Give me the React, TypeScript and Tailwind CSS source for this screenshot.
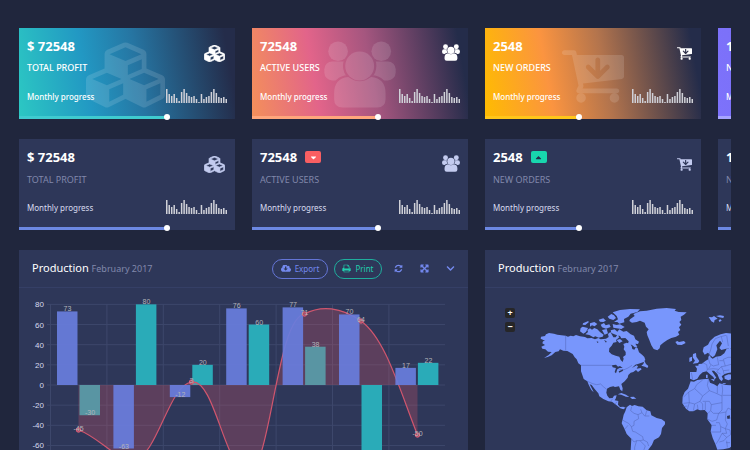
import React, { useId } from "react";
import { FaCaretDown, FaCaretUp, FaChevronDown } from "react-icons/fa";

type IconProps = { className?: string };

function CubesIcon({ className }: IconProps) {
  return (
    <svg viewBox="0 0 2176 1792" className={className} fill="currentColor" aria-hidden="true">
      <path d="M640 1632l384-192v-314l-384 164v342zM576 1178l404-173-404-173-404 173zM1664 1632l384-192v-314l-384 164v342zM1600 1178l404-173-404-173-404 173zM1152 893l384-165v-266l-384 164v267zM1088 512l441-189-441-189-441 189zM2176 1024v416q0 36-19 67t-52 47l-448 224q-25 14-57 14t-57-14l-448-224q-4-2-7-4-2 2-7 4l-448 224q-25 14-57 14t-57-14l-448-224q-33-16-52-47t-19-67v-416q0-38 21.5-70t56.5-48l434-186v-400q0-38 21.5-70t56.5-48l448-192q23-10 50-10t50 10l448 192q35 16 56.5 48t21.5 70v400l434 186q36 16 57 48t21 70z" fillRule="evenodd" />
    </svg>
  );
}

function UsersIcon({ className }: IconProps) {
  const id = useId();
  return (
    <svg viewBox="250 62 220 204" className={className} fill="currentColor" aria-hidden="true">
      <mask id={id} maskUnits="userSpaceOnUse" x="250" y="62" width="220" height="204">
        <rect x="250" y="62" width="220" height="204" fill="white" />
        <circle cx="359" cy="138" r="51" fill="black" />
        <rect x="274" y="166" width="171" height="110" rx="48" fill="black" />
      </mask>
      <g mask={`url(#${id})`}>
        <rect x="251" y="124" width="90" height="58" rx="24" />
        <rect x="378" y="124" width="91" height="58" rx="24" />
      </g>
      <circle cx="293" cy="93" r="30" />
      <circle cx="425" cy="93" r="30" />
      <circle cx="359" cy="138" r="44" />
      <path d="M324 172Q359 198 394 172Q438 176 438 222V240Q438 265 412 265H307Q281 265 281 240V222Q281 176 324 172Z" />
    </svg>
  );
}

function CartIcon({ className }: IconProps) {
  return (
    <svg viewBox="0 256 1664 1408" className={className} fill="currentColor" aria-hidden="true">
      <path fillRule="evenodd" d="M1280 704q0-26-19-45t-45-19q-26 0-45 19l-147 146v-293q0-26-19-45t-45-19-45 19-19 45v293l-147-146q-19-19-45-19t-45 19-19 45 19 45l256 256q19 19 45 19t45-19l256-256q19-19 19-45zM640 1536q0 52-38 90t-90 38-90-38-38-90 38-90 90-38 90 38 38 90zm896 0q0 52-38 90t-90 38-90-38-38-90 38-90 90-38 90 38 38 90zM1664 448v512q0 24-16.5 42.5t-40.5 21.5l-1044 122q13 60 13 70 0 16-24 64h920q26 0 45 19t19 45-19 45-45 19h-1024q-26 0-45-19t-19-45q0-11 8-31.5t16-36 21.5-40 15.5-29.5l-177-823h-204q-26 0-45-19t-19-45 19-45 45-19h256q16 0 28.5 6.5t19.5 15.5 13 24.5 8 26 5.5 29.5 4.5 26h1201q26 0 45 19t19 45z" />
    </svg>
  );
}

function PrintIcon({ className }: IconProps) {
  return (
    <svg viewBox="0 0 1792 1792" className={className} fill="currentColor" aria-hidden="true">
      <path fillRule="evenodd" d="M448 1536h896v-256h-896v256zm0-640h896v-384h-160q-40 0-68-28t-28-68v-160h-640v640zm1152 64q0-26-19-45t-45-19-45 19-19 45 19 45 45 19 45-19 19-45zm128 0v416q0 13-9.500 22.500t-22.500 9.500h-224v160q0 40-28 68t-68 28h-960q-40 0-68-28t-28-68v-160h-224q-13 0-22.500-9.500t-9.500-22.500v-416q0-79 56.500-135.500t135.500-56.500h64v-544q0-40 28-68t68-28h672q40 0 88 20t76 48l152 152q28 28 48 76t20 88v256h64q79 0 135.500 56.500t56.500 135.500z" />
    </svg>
  );
}

function CloudIcon({ className }: IconProps) {
  return (
    <svg viewBox="-64 256 1920 1280" className={className} fill="currentColor" aria-hidden="true">
      <path fillRule="evenodd" d="M1216 928q0-14-9-23t-23-9h-224v-352q0-13-9.500-22.500t-22.500-9.500h-192q-13 0-22.500 9.500t-9.500 22.500v352h-224q-13 0-22.500 9.500t-9.500 22.500q0 14 9 23l352 352q9 9 23 9t23-9l351-351q10-12 10-24zm640 224q0 159-112.500 271.500t-271.500 112.500h-1088q-185 0-316.500-131.500t-131.500-316.500q0-130 70-240t188-165q-2-30-2-43 0-212 150-362t362-150q156 0 285.500 87t188.500 231q71-62 166-62 106 0 181 75t75 181q0 76-41 138 130 31 213.500 135.500t83.500 238.500z" />
    </svg>
  );
}

function RefreshIcon({ className }: IconProps) {
  return (
    <svg viewBox="0 0 1792 1792" className={className} fill="currentColor" aria-hidden="true">
      <path d="M1639 1056q0 5-1 7-64 268-268 434.500t-478 166.500q-146 0-282.500-55t-243.500-157l-129 129q-19 19-45 19t-45-19-19-45v-448q0-26 19-45t45-19h448q26 0 45 19t19 45-19 45l-137 137q71 66 161 102t187 36q134 0 250-65t186-179q11-17 53-117 8-23 30-23h192q13 0 22.500 9.500t9.500 22.500zm25-800v448q0 26-19 45t-45 19h-448q-26 0-45-19t-19-45 19-45l138-138q-148-137-349-137-134 0-250 65t-186 179q-11 17-53 117-8 23-30 23h-199q-13 0-22.500-9.500t-9.500-22.500v-7q65-268 270-434.500t480-166.500q146 0 284 55.500t245 156.500l130-129q19-19 45-19t45 19 19 45z" />
    </svg>
  );
}

function ExpandIcon({ className }: IconProps) {
  return (
    <svg viewBox="0 0 1792 1792" className={className} fill="currentColor" stroke="currentColor" strokeWidth="80" aria-hidden="true">
      <path d="M1411 541l-355 355 355 355 144-144q29-31 70-14 39 17 39 59v448q0 26-19 45t-45 19h-448q-42 0-59-40-17-39 14-69l144-144-355-355-355 355 144 144q31 30 14 69-17 40-59 40h-448q-26 0-45-19t-19-45v-448q0-42 40-59 39-17 69 14l144 144 355-355-355-355-144 144q-19 19-45 19-12 0-24-5-40-17-40-59v-448q0-26 19-45t45-19h448q42 0 59 40 17 39-14 69l-144 144 355 355 355-355-144-144q-31-30-14-69 17-40 59-40h448q26 0 45 19t19 45v448q0 42-39 59-13 5-25 5-26 0-45-19z" />
    </svg>
  );
}

const sparkValues = [14, 9, 7, 9, 5, 2, 11, 14, 10, 7, 6, 7, 4, 1, 9, 4, 6, 7, 11, 14, 10, 6, 5, 6, 4];

function Sparkline() {
  return (
    <svg viewBox="0 0 61 14" className="h-[14px] w-[61px] fill-[#d0d1d8]" aria-hidden="true">
      {sparkValues.map((v, i) => (
        <rect key={i} x={i * 2.48} y={14 - v} width="1.5" height={v} />
      ))}
    </svg>
  );
}

type Stat = {
  value: string;
  title: string;
  Icon: (p: IconProps) => React.ReactElement;
  small: string;
  large: string;
  gradient: string;
  line: string;
  progress: number;
  trend?: "up" | "down";
};

const stats: Stat[] = [
  {
    value: "$ 72548",
    title: "TOTAL PROFIT",
    Icon: CubesIcon,
    small: "mt-[7px] mr-[2px] h-[17px] w-[21px] stroke-current stroke-[70]",
    large: "left-[67px] top-[14px] h-[66px] w-[79px]",
    gradient: "bg-[linear-gradient(80deg,#2cc8c3_0%,#2298c3_32%,#2675a2_55%,#242c4a_95%)]",
    line: "bg-[#3fcbcf]",
    progress: 68.5,
  },
  {
    value: "72548",
    title: "ACTIVE USERS",
    Icon: UsersIcon,
    small: "mt-[6px] h-[17px] w-[18px]",
    large: "left-[72px] top-[13px] h-[67px] w-[72px]",
    gradient: "bg-[linear-gradient(80deg,#f4905a_0%,#e2648a_30%,#a5567f_55%,#242c4a_95%)]",
    line: "bg-[#ffa67c]",
    progress: 58.5,
    trend: "down",
  },
  {
    value: "2548",
    title: "NEW ORDERS",
    Icon: CartIcon,
    small: "mt-[9px] mr-px h-[13px] w-[15px]",
    large: "left-[77px] top-[22px] h-[53px] w-[62px]",
    gradient: "bg-[linear-gradient(80deg,#ffbc00_0%,#fb9440_30%,#b3744d_55%,#242c4a_95%)]",
    line: "bg-[#ffc61a]",
    progress: 43.5,
    trend: "up",
  },
  {
    value: "1548",
    title: "NEW CLIENTS",
    Icon: UsersIcon,
    small: "mt-[6px] h-[17px] w-[18px]",
    large: "left-[72px] top-[13px] h-[67px] w-[72px]",
    gradient: "bg-[linear-gradient(80deg,#7d72fb_0%,#7a6ff5_30%,#5a54b4_55%,#242c4a_95%)]",
    line: "bg-[#a6a4ff]",
    progress: 60,
  },
];

function StatCard({ stat, vivid }: { stat: Stat; vivid: boolean }) {
  const { Icon } = stat;
  return (
    <article className={`relative flex flex-col text-white ${vivid ? stat.gradient : "bg-[#2e3759]"}`}>
      {vivid && <Icon className={`absolute text-white/13 ${stat.large}`} />}
      <div className="flex items-start justify-between px-2 pt-[10px]">
        <div>
          <div className="flex items-center gap-2">
            <p className="text-[13px] leading-4 font-bold">{stat.value}</p>
            {!vivid && stat.trend === "down" && (
              <span className="flex h-3 w-4 items-center justify-center rounded-[2px] bg-[#f95f62]">
                <FaCaretDown className="size-[9px]" />
              </span>
            )}
            {!vivid && stat.trend === "up" && (
              <span className="flex h-3 w-4 items-center justify-center rounded-[2px] bg-[#18d6ae] text-[#23304e]">
                <FaCaretUp className="size-[9px]" />
              </span>
            )}
          </div>
          <h3 className={`text-[9px] leading-3 ${vivid ? "mt-2 font-medium" : "mt-[9px] text-[#8188ab]"}`}>{stat.title}</h3>
        </div>
        <Icon className={`${stat.small} ${vivid ? "" : "text-[#c3cbef]"}`} />
      </div>
      <div className={`flex items-end justify-between px-2 ${vivid ? "mt-[15px]" : "mt-[14px]"}`}>
        <p className={`text-[8px] leading-3 ${vivid ? "font-medium" : "text-[#d7dbef]"}`}>Monthly progress</p>
        <Sparkline />
      </div>
      <div className="mt-[13px] h-[3px]">
        <div
          role="progressbar"
          aria-label={stat.title}
          aria-valuenow={stat.progress}
          className={`relative h-full ${vivid ? stat.line : "bg-[#6c88e2]"}`}
          style={{ width: `${stat.progress}%` }}
        >
          <span className="absolute -top-[2px] -right-[3px] size-[6px] rounded-full bg-white" />
        </div>
      </div>
    </article>
  );
}

function Panel({ actions, children }: { actions?: React.ReactNode; children: React.ReactNode }) {
  return (
    <section className="bg-[#2e3759]">
      <header className="flex h-[38px] items-center justify-between border-b border-[#353f66] px-[13px]">
        <h2 className="text-[11px] leading-4 text-white">
          Production <small className="text-[9px] text-[#8188ab]">February 2017</small>
        </h2>
        {actions}
      </header>
      {children}
    </section>
  );
}

function ChartActions() {
  return (
    <div className="flex items-center text-[8px] leading-3 text-[#7489ee]">
      <button type="button" className="mr-[6px] flex h-5 w-14 items-center justify-center gap-1 rounded-full border border-[#6475d6]">
        <CloudIcon className="h-[7px] w-[10px]" />
        Export
      </button>
      <button type="button" className="mr-3 flex h-5 w-12 items-center justify-center gap-1 rounded-full border border-[#1fae9d] text-[#20cfae]">
        <PrintIcon className="size-[9px]" />
        Print
      </button>
      <div className="flex items-center gap-[17px]">
        <button type="button" aria-label="Refresh">
          <RefreshIcon className="size-[9px]" />
        </button>
        <button type="button" aria-label="Expand">
          <ExpandIcon className="size-[9px]" />
        </button>
        <button type="button" aria-label="Collapse">
          <FaChevronDown className="size-[9px]" />
        </button>
      </div>
    </div>
  );
}

const blueSeries = [73, -63, -12, 76, 77, 70, 17];
const tealSeries = [-30, 80, 20, 60, 38, -80, 22];
const linePoints = [
  { x: 59.5, y: 142, label: "-45" },
  { x: 116, y: 171, label: "-71" },
  { x: 172.5, y: 94, label: "3" },
  { x: 229, y: 184, label: "-86" },
  { x: 285.5, y: 26, label: "71" },
  { x: 342, y: 33, label: "64" },
  { x: 398.5, y: 147, label: "-50" },
];
const curve =
  "M59.5 142C82 150 96 173 116 171C138 168 150 97 172.5 94C196 90 206 184 229 184C252 184 257 30 285.5 26C302 17 322 19 342 33C366 50 380 100 398.5 147";

const ZERO = 97;
const UNIT = 1.008;
const STEP = 56.4;

function ProductionChart() {
  const bar = (v: number, x: number, fill: string, opacity: number) => (
    <rect x={x} width="20.5" y={v > 0 ? ZERO - v * UNIT : ZERO} height={Math.abs(v) * UNIT} fill={fill} opacity={opacity} />
  );
  return (
    <svg viewBox="0 0 449 220" className="block w-full font-['Liberation_Sans',sans-serif]" role="img" aria-label="Production chart">
      <g stroke="#3d476b" strokeWidth="1">
        {[80, 60, 40, 20, 0, -20, -40, -60, -80, -100].map((v) => (
          <line key={v} x1="28" x2="426" y1={ZERO - v * UNIT} y2={ZERO - v * UNIT} />
        ))}
        {[0, 1, 2, 3, 4, 5, 6].map((i) => (
          <line key={i} x1={31.5 + i * STEP} x2={31.5 + i * STEP} y1="16" y2="202" />
        ))}
      </g>
      <g fill="#d6daee" fontSize="8" textAnchor="end">
        {[80, 60, 40, 20, 0, -20, -40, -60, -80].map((v) => (
          <text key={v} x="25" y={ZERO - v * UNIT + 3}>
            {v}
          </text>
        ))}
      </g>
      {tealSeries.map((v, i) => (
        <g key={i}>{bar(v, 60.5 + i * STEP, "#2aabb8", 1)}</g>
      ))}
      <path d={`${curve}V${ZERO}H59.5Z`} fill="#e2586a" fillOpacity="0.26" />
      <path d={curve} fill="none" stroke="#d0566e" strokeWidth="1.2" />
      {blueSeries.map((v, i) => (
        <g key={i}>{bar(v, 38 + i * STEP, "#687ddd", 0.93)}</g>
      ))}
      {linePoints.map((p) => (
        <circle key={p.x} cx={p.x} cy={p.y} r="2.2" fill="#a65268" stroke="#e0607a" />
      ))}
      <g fill="#b4b4ba" fontSize="7" textAnchor="middle">
        {blueSeries.map((v, i) => (
          <text key={i} x={48.5 + i * STEP} y={ZERO - v * UNIT}>
            {v}
          </text>
        ))}
        {tealSeries.map((v, i) => (
          <text key={i} x={71 + i * STEP} y={ZERO - v * UNIT}>
            {v}
          </text>
        ))}
        {linePoints.map((p) => (
          <text key={p.x} x={p.x} y={p.y + 1}>
            {p.label}
          </text>
        ))}
      </g>
    </svg>
  );
}

const land = [
  // North and Central America
  "M183 290L195 288 198 283 207 279 222 281 232 284 257 287 264 290 272 287 280 289 288 285 300 289 315 291 322 295 335 294 345 298 355 294 362 298 378 296 386 291 384 282 391 276 396 284 400 292 407 292 412 284 418 292 408 300 410 306 400 308 395 317 388 325 387 335 395 343 407 347 418 350 422 360 428 366 431 356 429 351 437 345 437 336 431 328 433 320 430 312 440 308 449 311 455 318 457 327 463 329 468 321 473 325 477 337 487 345 493 351 496 360 489 367 476 371 466 374 456 384 470 376 474 379 470 386 482 384 485 388 474 396 468 390 460 396 452 398 445 405 443 413 434 424 424 432 428 445 427 454 421 449 417 439 405 441 400 439 390 441 381 446 379 458 382 467 388 475 398 474 402 467 410 466 407 476 404 481 415 483 414 494 420 501 430 500 437 503 430 508 421 505 408 494 396 485 385 484 370 477 358 469 355 460 344 447 335 435 329 433 336 446 341 457 334 450 326 434 322 424 311 417 307 405 303 394 303 376 295 370 290 358 284 352 278 342 262 333 250 332 240 328 236 334 226 336 215 346 203 351 192 354 206 345 215 336 204 335 196 328 187 326 184 320 195 315 187 310 189 304 195 302 182 296Z",
  // Arctic islands
  "M302 264L308 260 324 264 318 276 310 281 300 274Z",
  "M322 270L330 265 336 269 343 264 352 268 360 276 371 284 368 290 356 293 346 289 340 292 328 285 316 283 324 276Z",
  "M309 250L325 243 326 247 316 255 308 254ZM330 250L343 246 352 252 344 259 336 256 330 260ZM356 239L370 235 378 242 370 246 360 245ZM362 254L372 249 377 256 388 253 392 261 378 266 366 262ZM366 270L380 267 384 280 374 284Z",
  "M383 230L394 222 402 226 408 234 400 240 388 236ZM398 217L420 210 450 207 480 208 472 216 452 221 445 230 432 237 433 247 418 251 412 246 402 246 414 238 410 228Z",
  "M398 252L410 255 420 253 434 261 424 267 400 263ZM392 271L404 268 412 275 418 268 430 275 440 273 452 283 462 287 466 298 477 305 474 312 466 311 472 320 464 322 456 315 444 311 446 304 436 294 424 295 420 288 407 284 394 279ZM410 300L420 297 428 304 418 309Z",
  // Newfoundland and the Antilles
  "M484 377L490 372 493 362 498 372 505 378 502 384 495 380Z",
  "M413 463L424 459 438 464 448 471 438 470 424 464ZM450 471L461 470 469 476 456 477Z",
  // Greenland
  "M450 238L464 228 460 222 480 214 500 212 530 206 560 204 588 207 584 212 596 216 620 217 612 224 602 230 604 240 598 246 604 254 597 262 601 270 594 276 598 284 588 290 574 294 562 300 550 308 541 316 539 325 532 331 521 327 514 316 508 300 502 286 500 276 506 268 498 260 494 248 480 242 470 246 456 248 448 243Z",
  // Iceland and Svalbard
  "M586 306L592 303 597 306 612 303 617 309 605 315 592 314Z",
  "M686 231L696 232 702 228 713 236 704 240 702 248 694 244ZM708 228L720 226 732 228 730 234 718 232ZM716 240L722 238 725 242 718 246Z",
  // South America
  "M440 502L450 494 456 498 464 495 475 499 488 500 500 511 511 514 514 526 530 534 545 538 555 545 555 553 546 564 543 582 537 592 522 600 516 614 506 628 498 640 490 656 482 676 474 690 470 720 476 740 462 726 454 690 452 655 452 630 454 596 440 582 434 568 425 550 428 538 431 524 436 514Z",
  // British Isles
  "M639 342L648 339 649 350 658 363 654 369 638 371 645 362 638 352ZM628 353L636 350 636 362 628 366Z",
  // Scandinavia and Europe
  "M668 334L671 322 684 314 690 303 704 290 722 283 738 279 790 284 850 276 930 262 1040 268 1180 284 1240 296 1210 320 1160 350 1110 400 1070 440 1050 480 1010 470 980 520 940 460 880 450 850 430 780 420 780 326 744 325 724 330 718 324 726 310 720 302 709 316 712 328 705 346 698 352 690 345 684 338 674 344Z",
  "M790 322L740 326 733 340 722 348 708 350 698 356 692 352 690 345 685 350 685 358 676 363 666 371 656 372 655 377 645 377 651 386 649 396 630 396 630 416 641 421 652 416 659 405 668 397 680 394 690 403 700 411 703 418 709 413 700 400 695 392 702 392 712 402 718 417 725 424 729 417 725 409 734 402 744 399 760 396 790 400Z",
  "M733 408L746 403 790 406 790 420 757 416 745 421 734 416ZM678 404L683 404 683 414 678 414ZM692 417L704 418 702 424ZM728 429L738 430 736 432 728 431Z",
  // Africa
  "M632 424L642 425 652 420 668 418 686 416 690 428 702 433 712 439 718 430 738 435 768 436 780 470 794 504 824 506 806 536 784 566 786 594 766 610 748 624 730 628 712 629 706 612 698 594 692 574 695 556 682 538 683 520 674 510 660 511 652 508 640 514 628 514 618 506 607 490 608 470 614 456 624 446Z",
].join("");

const borders =
  "M257 287V331M303 376H394L404 382 420 388 430 390 444 384 456 376M322 424L338 431 350 434 362 432 370 440 380 448M392 484L398 476M404 492L412 485M455 500L452 512 462 520 474 524 476 536 462 544 462 556 454 560 446 550 434 544 428 540M474 524L486 518 482 508M486 518L494 528 508 528M500 512L496 527M434 568L444 556M454 560L458 574 466 576 488 590 490 600 502 606 506 618M454 596L462 606 470 602 480 602 490 600M470 602L464 622 464 680M480 602L496 618 490 634M686 346L692 330 696 312 706 296 722 290 738 286M740 286L745 318M724 290L728 306M668 368L680 374 682 388 680 394M686 358L690 372 700 378 716 374 712 352M682 388L700 386 716 388 724 380 736 378 730 358 744 352 756 352M716 388L710 396 722 402M724 380L730 392 748 390M730 392L732 402M736 378L756 372M718 362H730M692 376L686 386M634 398L638 418M686 416L682 436 688 452 668 468 644 446 650 434 668 420M644 446L626 456 610 472M626 456L628 488 610 490M668 468L660 484 644 492 628 488M688 452L704 458 726 468 726 510 716 520 700 520 692 512 694 494 688 484 668 484M712 438V460M726 468L728 450 726 434M728 466H756M660 484L668 492 668 510M644 492L640 512M628 488L622 508M652 494L654 508M694 494L714 490 726 488M692 512L684 520M716 520L738 516 744 504 756 510M716 520L710 540 696 544 684 538M738 516L736 540 742 552 736 566 722 560 718 548 708 548M694 556L708 556M722 560V576H692M736 566L740 580 726 580 716 600 708 612M726 580L740 592 732 602 718 606M740 592L752 584 750 570 736 566M740 534H756M740 602L742 622M738 608L750 608M676 510L676 486M610 500L622 498";

function WorldMap() {
  return (
    <div className="relative">
      <svg viewBox="15 144 1347 660" className="block w-full" role="img" aria-label="World map">
        <path d={land} fill="#7896fc" />
        <path d={borders} fill="none" stroke="#4d62ae" strokeWidth="1.4" strokeLinejoin="round" />
        <path d="M396 376L408 374 414 380 420 378 428 384 418 384 412 388 408 400 404 396 408 384 398 382ZM416 394L430 388 428 393 418 398ZM741 528L750 526 749 536 742 536ZM372 300L380 304 378 308ZM350 304L356 306 352 309Z" fill="#2e3759" />
      </svg>
      <div className="absolute top-5 left-5 flex flex-col gap-1 text-[9px] leading-[10px] font-bold text-white">
        <button type="button" aria-label="Zoom in" className="flex size-[10px] items-center justify-center rounded-[2px] bg-[#262628]">
          +
        </button>
        <button type="button" aria-label="Zoom out" className="flex size-[10px] items-center justify-center rounded-[2px] bg-[#262628]">
          −
        </button>
      </div>
    </div>
  );
}

export default function App() {
  return (
    <main className="h-screen overflow-hidden bg-[#20263d] px-[19px] pt-7 font-['Noto_Sans',sans-serif]">
      <div className="h-full overflow-hidden">
        <div className="flex min-w-[915px] flex-col gap-5">
          <div className="grid grid-cols-4 gap-[17px]">
            {stats.map((s) => (
              <StatCard key={s.title} stat={s} vivid />
            ))}
          </div>
          <div className="grid grid-cols-4 gap-[17px]">
            {stats.map((s) => (
              <StatCard key={s.title} stat={s} vivid={false} />
            ))}
          </div>
          <div className="grid grid-cols-2 gap-[17px]">
            <Panel actions={<ChartActions />}>
              <ProductionChart />
            </Panel>
            <Panel>
              <WorldMap />
            </Panel>
          </div>
        </div>
      </div>
    </main>
  );
}
